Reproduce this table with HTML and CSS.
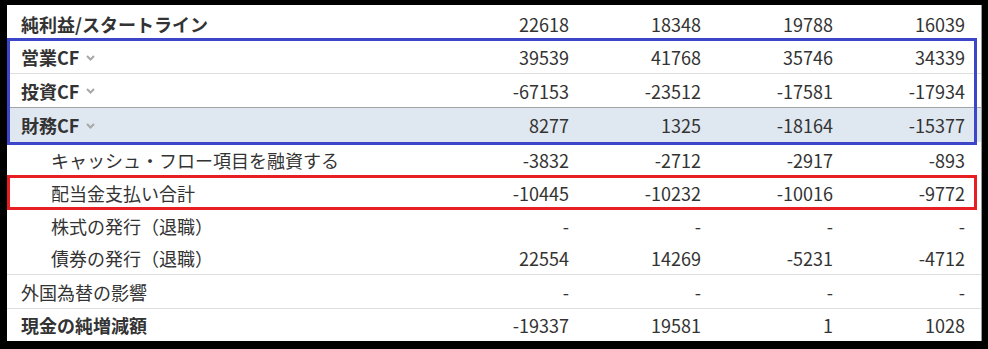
FILE: index.html
```html
<!DOCTYPE html>
<html lang="ja">
<head>
<meta charset="utf-8">
<link rel="stylesheet" href="styles.css">
</head>
<body>
<div class="frame">
  <div class="row first bold">
    <div class="label">純利益/スタートライン</div>
    <div class="num">22618</div><div class="num">18348</div><div class="num">19788</div><div class="num">16039</div>
  </div>
  <div class="box box-blue">
    <div class="row r2 line bold">
      <div class="label">営業CF<svg class="chev" width="9" height="6" viewBox="0 0 9 6"><path d="M1 1 L4.5 4.5 L8 1" fill="none" stroke="#a8a8a8" stroke-width="2"/></svg></div>
      <div class="num">39539</div><div class="num">41768</div><div class="num">35746</div><div class="num">34339</div>
    </div>
    <div class="row r3 bold">
      <div class="label">投資CF<svg class="chev" width="9" height="6" viewBox="0 0 9 6"><path d="M1 1 L4.5 4.5 L8 1" fill="none" stroke="#a8a8a8" stroke-width="2"/></svg></div>
      <div class="num">-67153</div><div class="num">-23512</div><div class="num">-17581</div><div class="num">-17934</div>
    </div>
    <div class="row r4 active bold">
      <div class="label">財務CF<svg class="chev" width="9" height="6" viewBox="0 0 9 6"><path d="M1 1 L4.5 4.5 L8 1" fill="none" stroke="#a8a8a8" stroke-width="2"/></svg></div>
      <div class="num">8277</div><div class="num">1325</div><div class="num">-18164</div><div class="num">-15377</div>
    </div>
  </div>
  <div class="row r5 sub">
    <div class="label">キャッシュ・フロー項目を融資する</div>
    <div class="num">-3832</div><div class="num">-2712</div><div class="num">-2917</div><div class="num">-893</div>
  </div>
  <div class="box box-red">
    <div class="row r6 sub">
      <div class="label">配当金支払い合計</div>
      <div class="num">-10445</div><div class="num">-10232</div><div class="num">-10016</div><div class="num">-9772</div>
    </div>
  </div>
  <div class="row r7 sub">
    <div class="label">株式の発行（退職）</div>
    <div class="num">-</div><div class="num">-</div><div class="num">-</div><div class="num">-</div>
  </div>
  <div class="row r8 sub line">
    <div class="label">債券の発行（退職）</div>
    <div class="num">22554</div><div class="num">14269</div><div class="num">-5231</div><div class="num">-4712</div>
  </div>
  <div class="row r9 line">
    <div class="label">外国為替の影響</div>
    <div class="num">-</div><div class="num">-</div><div class="num">-</div><div class="num">-</div>
  </div>
  <div class="row r10 bold">
    <div class="label">現金の純増減額</div>
    <div class="num">-19337</div><div class="num">19581</div><div class="num">1</div><div class="num">1028</div>
  </div>
</div>
</body>
</html>
```

FILE: styles.css
```css
* { box-sizing: border-box; }
html, body { margin: 0; padding: 0; }
body {
  background: #000;
  width: 988px;
  height: 349px;
  overflow: hidden;
  font-family: "Noto Sans CJK JP", "Noto Sans", sans-serif;
  font-size: 18px;
  color: #333;
}
.frame {
  margin: 5px 0 0 7px;
  width: 975px;
  height: 336px;
  background: #fff;
  border-right: 1px solid #9a9a9a;
  overflow: hidden;
}
.row {
  display: grid;
  grid-template-columns: 1fr repeat(4, 132px);
  align-items: center;
  padding-right: 4px;
  line-height: 24px;
  white-space: nowrap;
}
.label {
  padding-left: 14px;
  display: flex;
  align-items: center;
}
.num {
  text-align: right;
  padding-right: 12px;
  font-weight: 400;
}
.bold .label { font-weight: 700; }
.sub .label { padding-left: 44px; }
.chev { margin-left: 7px; margin-top: 1px; }
.line { border-bottom: 1px solid #dedede; }

.first { height: 33px; padding-top: 5px; }
.r2 { height: 33px; }
.r3 { height: 33px; }
.r4 { height: 35px; border-top: 1px solid #a4a4a4; background: #dfe7f0; }
.r5 { height: 30px; }
.r6 { height: 29px; }
.r7 { height: 32px; }
.r8 { height: 33px; }
.r9 { height: 34px; }
.r10 { height: 32px; }

.box { position: relative; padding: 3px 0; }
.box::after {
  content: "";
  position: absolute;
  left: 0;
  top: 0;
  right: 4px;
  bottom: 0;
  border: 3px solid;
  pointer-events: none;
}
.box-blue::after { border-color: #3d45c9; }
.box-red::after { border-color: #e81e25; }
```
